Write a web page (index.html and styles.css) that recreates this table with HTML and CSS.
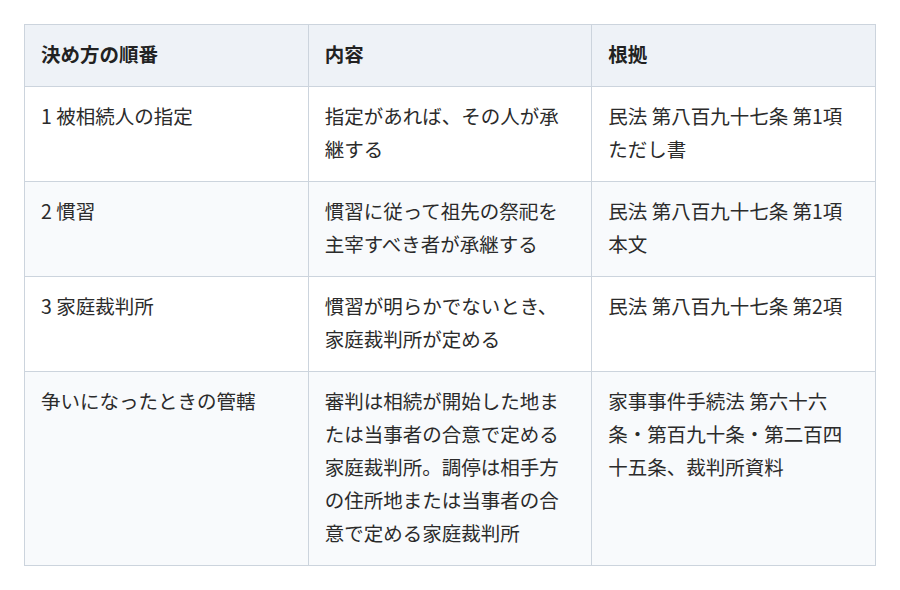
FILE: index.html
```html
<!DOCTYPE html>
<html lang="ja">
<head>
<meta charset="utf-8">
<link rel="stylesheet" href="styles.css">
</head>
<body>
<div class="wrap">
<table class="tbl">
  <thead>
    <tr><th>決め方の順番</th><th>内容</th><th>根拠</th></tr>
  </thead>
  <tbody>
    <tr><td>1 被相続人の指定</td><td>指定があれば、その人が承継する</td><td>民法 第八百九十七条 第1項 ただし書</td></tr>
    <tr><td>2 慣習</td><td>慣習に従って祖先の祭祀を主宰すべき者が承継する</td><td>民法 第八百九十七条 第1項 本文</td></tr>
    <tr><td>3 家庭裁判所</td><td>慣習が明らかでないとき、家庭裁判所が定める</td><td>民法 第八百九十七条 第2項</td></tr>
    <tr><td>争いになったときの管轄</td><td>審判は相続が開始した地または当事者の合意で定める家庭裁判所。調停は相手方の住所地または当事者の合意で定める家庭裁判所</td><td>家事事件手続法 第六十六条・第百九十条・第二百四十五条、裁判所資料</td></tr>
  </tbody>
</table>
</div>
</body>
</html>
```
FILE: styles.css
```css
html, body {
  margin: 0;
  padding: 0;
  background: #ffffff;
}
.wrap {
  padding: 24px;
}
.tbl {
  width: 852px;
  table-layout: fixed;
  border-collapse: collapse;
  font-family: "Noto Sans CJK JP", "Noto Sans", sans-serif;
  font-size: 19.5px;
  line-height: 33px;
  color: #2b2b2b;
}
.tbl th, .tbl td {
  border: 1px solid #ccd4dd;
  padding: 12px 16px 16px 16px;
  text-align: left;
  vertical-align: top;
}
.tbl th {
  background: #eef2f7;
  font-weight: 700;
  color: #222222;
}
.tbl tbody tr:nth-child(even) td {
  background: #f8fafc;
}
```
